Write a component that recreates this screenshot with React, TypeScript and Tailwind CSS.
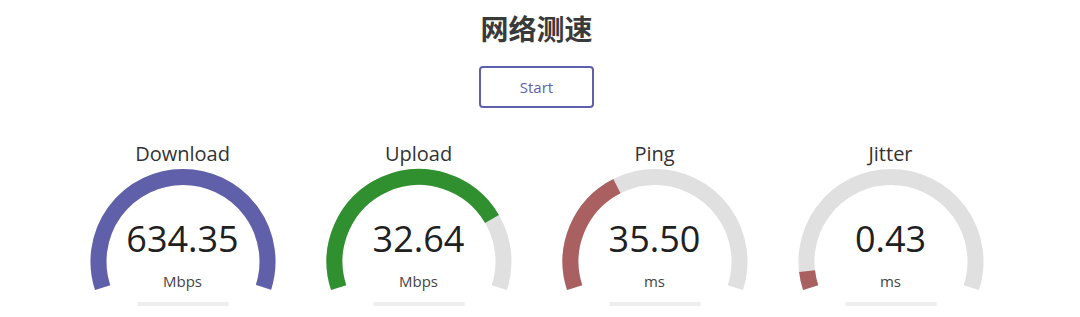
import React from 'react'

type Gauge = {
  label: string
  value: string
  unit: string
  amount: number
  color: string
}

const gauges: Gauge[] = [
  { label: 'Download', value: '634.35', unit: 'Mbps', amount: 0.9987, color: '#6060AA' },
  { label: 'Upload', value: '32.64', unit: 'Mbps', amount: 0.7766, color: '#309030' },
  { label: 'Ping', value: '35.50', unit: 'ms', amount: 0.376, color: '#AA6060' },
  { label: 'Jitter', value: '0.43', unit: 'ms', amount: 0.053, color: '#AA6060' },
]

const CX = 118
const CY = 95.5
const R = 84.5
const START = -198

// same arc as the canvas meter: -1.1π to 0.1π, clockwise
function arcPath(amount: number) {
  const a0 = (START * Math.PI) / 180
  const a1 = ((START + amount * 216) * Math.PI) / 180
  const x0 = CX + R * Math.cos(a0)
  const y0 = CY + R * Math.sin(a0)
  const x1 = CX + R * Math.cos(a1)
  const y1 = CY + R * Math.sin(a1)
  const large = amount * 216 > 180 ? 1 : 0
  return `M ${x0} ${y0} A ${R} ${R} 0 ${large} 1 ${x1} ${y1}`
}

function Meter({ g }: { g: Gauge }) {
  return (
    <div className="flex flex-col items-center w-[236px]">
      <div className="text-[20px] leading-[24px] text-[#333333]">{g.label}</div>
      <div className="relative w-[236px] h-[145px]">
        <svg width="236" height="145" viewBox="0 0 236 145" className="block">
          <path d={arcPath(1)} fill="none" stroke="#E0E0E0" strokeWidth="16" />
          <path d={arcPath(g.amount)} fill="none" stroke={g.color} strokeWidth="16" />
          <rect x="72.5" y="136" width="91" height="4" fill="#EEEEEE" />
        </svg>
        <div className="absolute left-0 right-0 top-[55px] text-center text-[36px] leading-[36px] text-[#202020]">
          {g.value}
        </div>
        <div className="absolute left-0 right-0 top-[108px] text-center text-[15px] leading-[15px] text-[#444444]">
          {g.unit}
        </div>
      </div>
    </div>
  )
}

export default function App() {
  return (
    <div
      className="w-[1073px] h-[317px] overflow-hidden bg-white flex flex-col items-center"
      style={{ fontFamily: '"Open Sans", "Noto Sans CJK SC", sans-serif' }}
    >
      <h1
        className="mt-[10px] text-[28px] leading-[36px] font-bold text-[#3a3a3a]"
        style={{ fontFamily: '"Noto Sans CJK SC", "Open Sans", sans-serif' }}
      >
        网络测速
      </h1>
      <button className="mt-[20px] w-[115px] h-[42px] border-2 border-[#6060AA] rounded-[4px] text-[15px] text-[#6060AA] bg-white">
        Start
      </button>
      <div className="mt-[34px] flex">
        {gauges.map((g) => (
          <Meter key={g.label} g={g} />
        ))}
      </div>
    </div>
  )
}
